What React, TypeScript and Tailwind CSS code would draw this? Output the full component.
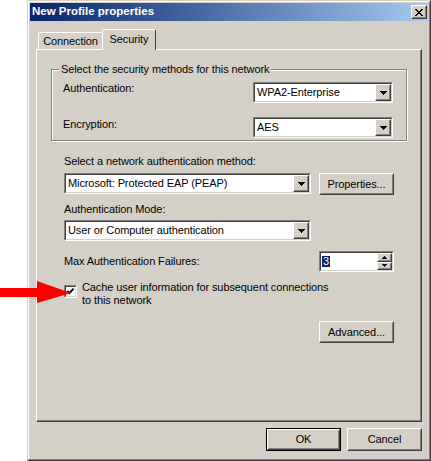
import type { ReactNode } from 'react';

// Win2000 style 3D boxes
function Raised({ className = '', inner = '', children }: { className?: string; inner?: string; children?: ReactNode }) {
  return (
    <div className={`border border-t-white border-l-white border-r-[#404040] border-b-[#404040] bg-[#d4d0c8] ${className}`}>
      <div className={`h-full w-full border border-t-[#d4d0c8] border-l-[#d4d0c8] border-r-[#808080] border-b-[#808080] ${inner}`}>
        {children}
      </div>
    </div>
  );
}

function Sunken({ className = '', inner = '', children }: { className?: string; inner?: string; children?: ReactNode }) {
  return (
    <div className={`border border-t-[#808080] border-l-[#808080] border-r-white border-b-white ${className}`}>
      <div className={`h-full w-full border border-t-[#404040] border-l-[#404040] border-r-[#d4d0c8] border-b-[#d4d0c8] bg-white ${inner}`}>
        {children}
      </div>
    </div>
  );
}

function DownArrow({ w = 7, h = 4 }: { w?: number; h?: number }) {
  return (
    <svg width={w} height={h} viewBox={`0 0 ${w} ${h}`} shapeRendering="crispEdges">
      <polygon points={`0,0 ${w},0 ${w / 2},${h}`} fill="#000" />
    </svg>
  );
}

function UpArrow({ w = 5, h = 3 }: { w?: number; h?: number }) {
  return (
    <svg width={w} height={h} viewBox={`0 0 ${w} ${h}`} shapeRendering="crispEdges">
      <polygon points={`0,${h} ${w},${h} ${w / 2},0`} fill="#000" />
    </svg>
  );
}

function Combo({ value, className = '' }: { value: string; className?: string }) {
  return (
    <Sunken className={`h-[21px] ${className}`} inner="flex items-stretch">
      <span className="flex-1 flex items-center pl-[2px] leading-none whitespace-nowrap">{value}</span>
      <Raised className="w-[16px] flex-none" inner="flex items-center justify-center">
        <DownArrow />
      </Raised>
    </Sunken>
  );
}

function Button({ label, className = '' }: { label: string; className?: string }) {
  return (
    <Raised className={`w-[75px] flex-none ${className}`} inner="flex items-center justify-center">
      <span className="leading-none">{label}</span>
    </Raised>
  );
}

export default function App() {
  return (
    <div className="relative w-[431px] h-[461px] bg-white font-['Liberation_Sans',Arial,sans-serif] text-[11px] tracking-[-0.1px] text-black overflow-hidden">
      <div className="ml-[27px] w-[404px] h-[461px] border border-t-[#d4d0c8] border-l-[#d4d0c8] border-r-[#404040] border-b-[#404040]">
        <div className="h-full flex flex-col border border-t-white border-l-white border-r-[#808080] border-b-[#808080] bg-[#d4d0c8] p-px">
          {/* Title bar */}
          <div className="h-[18px] flex-none flex items-center pl-[2px] pr-px bg-linear-to-r from-[#0a246a] to-[#a6caf0]">
            <span className="font-bold text-white text-[11.5px] tracking-normal leading-none">New Profile properties</span>
            <Raised className="ml-auto w-[16px] h-[14px]" inner="flex items-center justify-center">
              <svg width="8" height="7" viewBox="0 0 8 7" shapeRendering="crispEdges">
                <path d="M0 0h2v1h-2zM6 0h2v1h-2zM1 1h2v1h-2zM5 1h2v1h-2zM2 2h4v1h-4zM3 3h2v1h-2zM2 4h4v1h-4zM1 5h2v1h-2zM5 5h2v1h-2zM0 6h2v1h-2zM6 6h2v1h-2z" fill="#000" />
              </svg>
            </Raised>
          </div>

          <div className="flex-1 flex flex-col px-[6px] pb-[7px] overflow-hidden">
            {/* Tabs */}
            <div className="mt-[8px] ml-[2px] h-[20px] flex-none flex items-end">
              <div className="w-[65px] h-[17px] flex items-center justify-center border-l border-t border-l-white border-t-white border-r border-r-[#404040] rounded-tl-[2px] rounded-tr-[2px]">
                <span className="leading-none">Connection</span>
              </div>
              <div className="relative z-10 -ml-[1px] -mb-px w-[54px] h-[21px] flex items-start justify-center pt-[4px] bg-[#d4d0c8] border-l border-t border-l-white border-t-white border-r border-r-[#404040] rounded-tl-[2px] rounded-tr-[2px]">
                <span className="leading-none">Security</span>
              </div>
            </div>

            {/* Tab panel */}
            <div className="h-[373px] flex-none overflow-hidden border border-t-white border-l-white border-r-[#404040] border-b-[#404040] shadow-[inset_-1px_-1px_0_#808080]">
              {/* Group box */}
              <div className="relative ml-[14px] mt-[19px] w-[356px] h-[72px] border border-[#808080] shadow-[1px_1px_0_#fff,inset_1px_1px_0_#fff] pt-[12px] pl-[11px] pr-[13px]">
                <span className="absolute left-[7px] -top-[7px] px-[2px] bg-[#d4d0c8] leading-[13px]">
                  Select the security methods for this network
                </span>
                <div className="flex items-start justify-between">
                  <span className="leading-[13px]">Authentication:</span>
                  <Combo value="WPA2-Enterprise" className="w-[140px]" />
                </div>
                <div className="mt-[14px] flex items-start justify-between">
                  <span className="mt-px leading-[13px]">Encryption:</span>
                  <Combo value="AES" className="w-[140px]" />
                </div>
              </div>

              {/* Lower section */}
              <div className="ml-[27px] w-[330px]">
                <div className="mt-[14px] leading-[13px]">Select a network authentication method:</div>
                <div className="mt-[5px] flex items-start justify-between">
                  <Combo value="Microsoft: Protected EAP (PEAP)" className="w-[247px]" />
                  <Button label="Properties..." className="h-[22px]" />
                </div>
                <div className="mt-[8px] leading-[13px]">Authentication Mode:</div>
                <Combo value="User or Computer authentication" className="mt-[4px] w-[247px]" />

                <div className="mt-[10px] flex items-center justify-between">
                  <span className="leading-[13px]">Max Authentication Failures:</span>
                  <Sunken className="w-[75px] h-[21px]" inner="flex items-stretch">
                    <div className="flex-1 flex items-center pl-px">
                      <span className="bg-[#0a246a] text-white leading-[11px] px-px">3</span>
                    </div>
                    <div className="w-[15px] flex flex-col">
                      <Raised className="flex-1" inner="flex items-center justify-center">
                        <UpArrow />
                      </Raised>
                      <Raised className="flex-1" inner="flex items-center justify-center">
                        <DownArrow w={5} h={3} />
                      </Raised>
                    </div>
                  </Sunken>
                </div>

                <div className="mt-[9px] flex items-start">
                  <Sunken className="mt-[4px] w-[13px] h-[13px] flex-none" inner="flex items-center justify-center">
                    <svg width="9" height="9" viewBox="0 0 9 9">
                      <polyline points="1.3,3.8 3.4,6.2 7.6,1.6" fill="none" stroke="#000" strokeWidth="1.8" />
                    </svg>
                  </Sunken>
                  <div className="ml-[5px] leading-[13px]">
                    Cache user information for subsequent connections
                    <br />
                    to this network
                  </div>
                </div>

                <div className="mt-[14px] flex justify-end">
                  <Button label="Advanced..." className="h-[22px]" />
                </div>
              </div>
            </div>

            {/* Dialog buttons */}
            <div className="mt-[6px] h-[23px] flex-none flex justify-end gap-[6px]">
              <div className="w-[75px] h-[23px] border border-black">
                <Raised className="w-full h-full" inner="flex items-center justify-center">
                  <span className="leading-none">OK</span>
                </Raised>
              </div>
              <Button label="Cancel" className="h-[23px]" />
            </div>
          </div>
        </div>
      </div>

      {/* Red pointer arrow */}
      <svg className="absolute left-0 top-[280px]" width="72" height="24" viewBox="0 0 72 24">
        <polygon points="0,8 37,8 37,1 71,13 37,23 37,17 0,17" fill="#f00" />
      </svg>
    </div>
  );
}
